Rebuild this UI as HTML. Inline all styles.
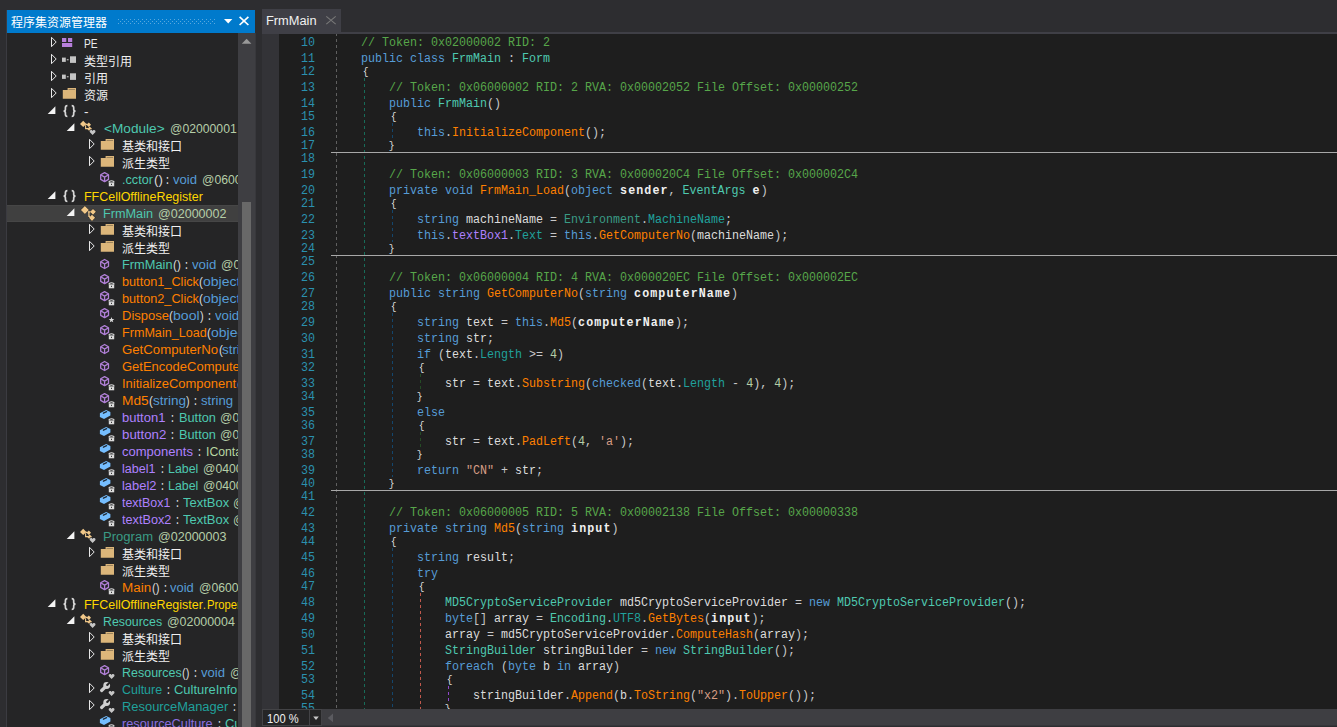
<!DOCTYPE html>
<html><head><meta charset="utf-8"><title>dnSpy</title>
<style>
html,body{margin:0;padding:0}
body{width:1337px;height:727px;overflow:hidden;background:#2d2d30;position:relative;font-family:"Liberation Sans",sans-serif;}
div,svg,span{position:absolute;box-sizing:border-box}
.t{font:12.5px/17px "Liberation Sans",sans-serif;white-space:pre;transform-origin:0 0;top:1px;height:17px}
.r{left:0;width:231px;height:17px}
.ic{width:18px;height:17px;overflow:visible}
.cl{left:71px;font:12.5px/16px "Liberation Mono",monospace;white-space:pre;transform-origin:0 0;transform:scaleX(0.9332);height:16px;color:#dcdcdc}
.cl span{position:static}
.ln{left:39px;font:12.5px/16px "Liberation Mono",monospace;white-space:pre;transform-origin:0 0;transform:scaleX(0.9332);height:16px;color:#2b91af}
.cl i{font-style:normal;font-size:10.4px;position:relative;top:0px;color:#dcdcdc}
.cl b{font-weight:bold;color:#f0f0f0;letter-spacing:1.157px}
.k{color:#569cd6}.y{color:#4ec9b0}.sy{color:#3a9b85}.m{color:#ff8000}.n{color:#b5cea8}.f{color:#ae81ff}.p{color:#20a19c}.c{color:#57a64a}.s{color:#d69d85}.u{color:#c8c8c8}
.g{width:1px}
.sep{left:69px;width:1006px;height:1px;background:#a8a8a8}
.cj{font-family:"Liberation Sans","Noto Sans CJK SC",sans-serif;font-size:12px}
</style></head><body>

<svg width="0" height="0" style="left:0;top:0"><defs><g id="ac"><path d="M0.5 2.3 L5.2 7 L0.5 11.7 Z" fill="none" stroke="#e8e8e8" stroke-width="1"/></g><g id="ae"><path d="M7.4 3.3 V11 H-0.3 Z" fill="#f4f4f4"/></g><g id="iPE" fill="#b77fdb"><rect x="1" y="3" width="4.3" height="4"/><rect x="7" y="3" width="4.2" height="4"/><rect x="1" y="8" width="10.2" height="4"/></g><g id="iRef" fill="#c4c4c4"><rect x="1" y="5.6" width="3.8" height="4.3"/><rect x="5.8" y="7.2" width="1.8" height="1.1"/><rect x="9" y="4.3" width="6" height="6.6"/></g><g id="iFo"><path d="M1.8 4 H6.6 V2.1 H15 V12.7 H1.8 Z" fill="#dcb67a"/><path d="M7.6 3.6 H14" stroke="#2a2a2a" stroke-width="0.7" opacity=".55"/></g><g id="iNs" fill="none" stroke="#d8d8d8" stroke-width="1.7"><path d="M6.4 2.6 C4.6 2.6 4.4 3.4 4.4 4.8 V6.4 C4.4 7.6 3.8 8 2.6 8.05 C3.8 8.1 4.4 8.5 4.4 9.7 V11.3 C4.4 12.7 4.6 13.5 6.4 13.5"/><path d="M10.7 2.6 C12.5 2.6 12.7 3.4 12.7 4.8 V6.4 C12.7 7.6 13.3 8 14.5 8.05 C13.3 8.1 12.7 8.5 12.7 9.7 V11.3 C12.7 12.7 12.5 13.5 10.7 13.5"/></g><g id="iCl"><path d="M4.9 0.9 L8.9 4.9 L4.9 8.9 L0.9 4.9Z M13.0 3.9 L15.9 6.8 L13.0 9.7 L10.1 6.8Z M12.0 9.7 L15.1 12.8 L12.0 15.9 L8.9 12.8Z" fill="#f1c889" stroke="#1c1c1c" stroke-width="1" paint-order="stroke"/><path d="M8 6.8 H10.5 M8.9 6.8 V11.4 H10" fill="none" stroke="#f1c889" stroke-width="1.2"/></g><g id="iCs"><path d="M3.2 0.7 L6.4 3.9 L3.2 7.1 L0.0 3.9Z M8.8 2.5 L11.0 4.7 L8.8 6.9 L6.6 4.7Z M9.7 6.6 L12.1 9.0 L9.7 11.4 L7.3 9.0Z" fill="#f1c889"/><path d="M5.5 4.4 H7.5 M5.6 5.2 V8.6 H8" fill="none" stroke="#f1c889" stroke-width="1.1"/></g><g id="oH"><path d="M12.6 15.1 L9.9 12.2 C9.3 11.2 9.9 9.9 11.1 9.9 C11.9 9.9 12.4 10.4 12.6 10.9 C12.8 10.4 13.3 9.9 14.1 9.9 C15.3 9.9 15.9 11.2 15.3 12.2 Z" fill="#c6c6c6" stroke="#252526" stroke-width="1.2" paint-order="stroke"/></g><g id="oL"><path d="M10.2 11.4 V10.6 Q12.5 8.9 14.8 10.6 V11.4" fill="none" stroke="#d8d8d8" stroke-width="1.2"/><rect x="9.8" y="11.4" width="5.4" height="3.9" fill="#dadada"/><rect x="12" y="12.8" width="1" height="1.1" fill="#252526"/></g><g id="oS"><polygon points="12.50,9.90 13.23,11.89 15.35,11.97 13.69,13.29 14.26,15.33 12.50,14.15 10.74,15.33 11.31,13.29 9.65,11.97 11.77,11.89" fill="#dcdcdc"/></g><g id="iMe" fill="none" stroke="#b180d7" stroke-width="1.3" stroke-linejoin="round"><path d="M5.6 3.5 L9.5 5.7 V10.3 L5.6 12.5 L1.7 10.3 V5.7 Z"/><path d="M2 5.9 L5.6 8 L9.2 5.9 M5.6 8 V12.3"/></g><g id="iFi"><path d="M7.1 0.9 L11.4 3 V6.6 L5 10.1 L0.9 8 V4.3 Z" fill="#75beff"/><path d="M4.4 4.2 L7.6 2.7" stroke="#1f2a36" stroke-width="1.3" stroke-linecap="round"/></g><g id="iWr"><path d="M7 5.4 L2.6 9.5" stroke="#cfcfcf" stroke-width="3.2" stroke-linecap="round" fill="none"/><circle cx="7.7" cy="4.5" r="3.4" fill="#cfcfcf"/><circle cx="8.3" cy="3.9" r="1.15" fill="#252526"/><path d="M8.6 3.6 L11.6 0.6" stroke="#252526" stroke-width="2" fill="none"/></g></defs></svg>
<div style="left:7px;top:10px;width:248px;height:23px;background:#007acc"></div>
<svg role="img" aria-label="程序集资源管理器" style="left:11.0px;top:14.5px;overflow:visible" width="98" height="18"><text class="cj" x="0" y="12" fill="#ffffff">程序集资源管理器</text></svg>
<svg style="left:0;top:0" width="260" height="34"><path d="M118 19h1v1h-1zM122 19h1v1h-1zM126 19h1v1h-1zM130 19h1v1h-1zM134 19h1v1h-1zM138 19h1v1h-1zM142 19h1v1h-1zM146 19h1v1h-1zM150 19h1v1h-1zM154 19h1v1h-1zM158 19h1v1h-1zM162 19h1v1h-1zM166 19h1v1h-1zM170 19h1v1h-1zM174 19h1v1h-1zM178 19h1v1h-1zM182 19h1v1h-1zM186 19h1v1h-1zM190 19h1v1h-1zM194 19h1v1h-1zM198 19h1v1h-1zM202 19h1v1h-1zM206 19h1v1h-1zM210 19h1v1h-1zM214 19h1v1h-1zM120 21h1v1h-1zM124 21h1v1h-1zM128 21h1v1h-1zM132 21h1v1h-1zM136 21h1v1h-1zM140 21h1v1h-1zM144 21h1v1h-1zM148 21h1v1h-1zM152 21h1v1h-1zM156 21h1v1h-1zM160 21h1v1h-1zM164 21h1v1h-1zM168 21h1v1h-1zM172 21h1v1h-1zM176 21h1v1h-1zM180 21h1v1h-1zM184 21h1v1h-1zM188 21h1v1h-1zM192 21h1v1h-1zM196 21h1v1h-1zM200 21h1v1h-1zM204 21h1v1h-1zM208 21h1v1h-1zM212 21h1v1h-1zM118 23h1v1h-1zM122 23h1v1h-1zM126 23h1v1h-1zM130 23h1v1h-1zM134 23h1v1h-1zM138 23h1v1h-1zM142 23h1v1h-1zM146 23h1v1h-1zM150 23h1v1h-1zM154 23h1v1h-1zM158 23h1v1h-1zM162 23h1v1h-1zM166 23h1v1h-1zM170 23h1v1h-1zM174 23h1v1h-1zM178 23h1v1h-1zM182 23h1v1h-1zM186 23h1v1h-1zM190 23h1v1h-1zM194 23h1v1h-1zM198 23h1v1h-1zM202 23h1v1h-1zM206 23h1v1h-1zM210 23h1v1h-1zM214 23h1v1h-1z" fill="#59a8de"/><path d="M224 19 H232.4 L228.2 23.4Z" fill="#fff"/><path d="M239.6 16.8 L248.4 25 M248.4 16.8 L239.6 25" stroke="#fff" stroke-width="1.7" fill="none"/></svg>
<div style="left:6px;top:10px;width:1px;height:717px;background:#3b3b41"></div>
<div id="tree" style="left:7px;top:33px;width:231px;height:694px;background:#252526;overflow:hidden">
<div class="r" style="top:2px;">
<svg class="ic" style="left:43.5px;top:0"><use href="#ac"/></svg>
<svg class="ic" style="left:54.0px;top:0"><use href="#iPE" x="0.0" y="0.0"/></svg>
<div class="t" style="left:77.3px;color:#ececec;transform:scaleX(0.8156)">PE</div>
</div>
<div class="r" style="top:19px;">
<svg class="ic" style="left:43.5px;top:0"><use href="#ac"/></svg>
<svg class="ic" style="left:54.0px;top:0"><use href="#iRef" x="0.0" y="0.0"/></svg>
<svg role="img" aria-label="类型引用" style="left:76.8px;top:1.5px;overflow:visible" width="50" height="18"><text class="cj" x="0" y="12" fill="#f0f0f0">类型引用</text></svg>
</div>
<div class="r" style="top:36px;">
<svg class="ic" style="left:43.5px;top:0"><use href="#ac"/></svg>
<svg class="ic" style="left:54.0px;top:0"><use href="#iRef" x="0.0" y="0.0"/></svg>
<svg role="img" aria-label="引用" style="left:76.8px;top:1.5px;overflow:visible" width="26" height="18"><text class="cj" x="0" y="12" fill="#f0f0f0">引用</text></svg>
</div>
<div class="r" style="top:53px;">
<svg class="ic" style="left:43.5px;top:0"><use href="#ac"/></svg>
<svg class="ic" style="left:54.0px;top:0"><use href="#iFo" x="0.0" y="0.0"/></svg>
<svg role="img" aria-label="资源" style="left:76.8px;top:1.5px;overflow:visible" width="26" height="18"><text class="cj" x="0" y="12" fill="#f0f0f0">资源</text></svg>
</div>
<div class="r" style="top:70px;">
<svg class="ic" style="left:41.0px;top:0"><use href="#ae"/></svg>
<svg class="ic" style="left:54.0px;top:0"><use href="#iNs" x="0.0" y="0.0"/></svg>
<div class="t" style="left:77.3px;color:#ececec;transform:scaleX(1.0812)">-</div>
</div>
<div class="r" style="top:87px;">
<svg class="ic" style="left:60.0px;top:0"><use href="#ae"/></svg>
<svg class="ic" style="left:73.0px;top:0"><use href="#iCs" x="0.0" y="0.0"/></svg>
<svg class="ic" style="left:73.0px;top:0"><use href="#oH"/></svg>
<div class="t" style="left:97.3px;color:#4ec9b0;transform:scaleX(1.0900)">&lt;Module&gt;</div>
<div class="t" style="left:163.0px;color:#b5cea8;transform:scaleX(0.9766)">@02000001</div>
</div>
<div class="r" style="top:104px;">
<svg class="ic" style="left:81.5px;top:0"><use href="#ac"/></svg>
<svg class="ic" style="left:92.0px;top:0"><use href="#iFo" x="0.0" y="0.0"/></svg>
<svg role="img" aria-label="基类和接口" style="left:114.8px;top:1.5px;overflow:visible" width="62" height="18"><text class="cj" x="0" y="12" fill="#f0f0f0">基类和接口</text></svg>
</div>
<div class="r" style="top:121px;">
<svg class="ic" style="left:81.5px;top:0"><use href="#ac"/></svg>
<svg class="ic" style="left:92.0px;top:0"><use href="#iFo" x="0.0" y="0.0"/></svg>
<svg role="img" aria-label="派生类型" style="left:114.8px;top:1.5px;overflow:visible" width="50" height="18"><text class="cj" x="0" y="12" fill="#f0f0f0">派生类型</text></svg>
</div>
<div class="r" style="top:138px;">
<svg class="ic" style="left:92.0px;top:0"><use href="#iMe" x="0.0" y="-1.9"/></svg>
<svg class="ic" style="left:92.0px;top:0"><use href="#oL"/></svg>
<div class="t" style="left:115.3px;color:#4ec9b0;transform:scaleX(1.0112)">.cctor</div>
<div class="t" style="left:146.6px;color:#dadada;transform:scaleX(1.0572)">()</div>
<div class="t" style="left:159.2px;color:#dadada;font-weight:bold;transform:scaleX(0.6911)">:</div>
<div class="t" style="left:165.8px;color:#569cd6;transform:scaleX(1.0467)">void</div>
<div class="t" style="left:194.8px;color:#b5cea8;transform:scaleX(0.9766)">@06000001</div>
</div>
<div class="r" style="top:155px;">
<svg class="ic" style="left:41.0px;top:0"><use href="#ae"/></svg>
<svg class="ic" style="left:54.0px;top:0"><use href="#iNs" x="0.0" y="0.0"/></svg>
<div class="t" style="left:77.3px;color:#ffd700;transform:scaleX(0.9963)">FFCellOfflineRegister</div>
</div>
<div class="r" style="top:172px;background:#404040;box-shadow:inset 0 1px #464646,inset 0 -1px #464646;">
<svg class="ic" style="left:60.0px;top:0"><use href="#ae"/></svg>
<svg class="ic" style="left:73.0px;top:0"><use href="#iCl" x="0.0" y="0.0"/></svg>
<div class="t" style="left:96.4px;color:#4ec9b0;transform:scaleX(1.0142)">FrmMain</div>
<div class="t" style="left:150.8px;color:#b5cea8;transform:scaleX(1.0029)">@02000002</div>
</div>
<div class="r" style="top:189px;">
<svg class="ic" style="left:81.5px;top:0"><use href="#ac"/></svg>
<svg class="ic" style="left:92.0px;top:0"><use href="#iFo" x="0.0" y="0.0"/></svg>
<svg role="img" aria-label="基类和接口" style="left:114.8px;top:1.5px;overflow:visible" width="62" height="18"><text class="cj" x="0" y="12" fill="#f0f0f0">基类和接口</text></svg>
</div>
<div class="r" style="top:206px;">
<svg class="ic" style="left:81.5px;top:0"><use href="#ac"/></svg>
<svg class="ic" style="left:92.0px;top:0"><use href="#iFo" x="0.0" y="0.0"/></svg>
<svg role="img" aria-label="派生类型" style="left:114.8px;top:1.5px;overflow:visible" width="50" height="18"><text class="cj" x="0" y="12" fill="#f0f0f0">派生类型</text></svg>
</div>
<div class="r" style="top:223px;">
<svg class="ic" style="left:92.0px;top:0"><use href="#iMe" x="0.0" y="0.0"/></svg>
<div class="t" style="left:115.3px;color:#4ec9b0;transform:scaleX(1.0243)">FrmMain</div>
<div class="t" style="left:166.0px;color:#dadada;transform:scaleX(0.9370)">()</div>
<div class="t" style="left:177.8px;color:#dadada;font-weight:bold;transform:scaleX(0.6911)">:</div>
<div class="t" style="left:184.6px;color:#569cd6;transform:scaleX(1.0598)">void</div>
<div class="t" style="left:214.0px;color:#b5cea8;transform:scaleX(0.9766)">@06000002</div>
</div>
<div class="r" style="top:240px;">
<svg class="ic" style="left:92.0px;top:0"><use href="#iMe" x="0.0" y="-1.9"/></svg>
<svg class="ic" style="left:92.0px;top:0"><use href="#oL"/></svg>
<div class="t" style="left:115.3px;color:#ff8000;transform:scaleX(1.0154)">button1_Click</div>
<div class="t" style="left:192.4px;color:#dadada;transform:scaleX(0.9370)">(</div>
<div class="t" style="left:196.2px;color:#569cd6;transform:scaleX(1.1183)">object</div>
</div>
<div class="r" style="top:257px;">
<svg class="ic" style="left:92.0px;top:0"><use href="#iMe" x="0.0" y="-1.9"/></svg>
<svg class="ic" style="left:92.0px;top:0"><use href="#oL"/></svg>
<div class="t" style="left:115.3px;color:#ff8000;transform:scaleX(1.0154)">button2_Click</div>
<div class="t" style="left:192.4px;color:#dadada;transform:scaleX(0.9370)">(</div>
<div class="t" style="left:196.2px;color:#569cd6;transform:scaleX(1.1183)">object</div>
</div>
<div class="r" style="top:274px;">
<svg class="ic" style="left:92.0px;top:0"><use href="#iMe" x="0.0" y="-1.9"/></svg>
<svg class="ic" style="left:92.0px;top:0"><use href="#oS"/></svg>
<div class="t" style="left:115.3px;color:#ff8000;transform:scaleX(1.0408)">Dispose</div>
<div class="t" style="left:162.4px;color:#dadada;transform:scaleX(0.9370)">(</div>
<div class="t" style="left:166.2px;color:#569cd6;transform:scaleX(1.1256)">bool</div>
<div class="t" style="left:192.8px;color:#dadada;transform:scaleX(0.8890)">)</div>
<div class="t" style="left:200.8px;color:#dadada;font-weight:bold;transform:scaleX(0.6911)">:</div>
<div class="t" style="left:207.8px;color:#569cd6;transform:scaleX(1.0554)">void</div>
</div>
<div class="r" style="top:291px;">
<svg class="ic" style="left:92.0px;top:0"><use href="#iMe" x="0.0" y="-1.9"/></svg>
<svg class="ic" style="left:92.0px;top:0"><use href="#oL"/></svg>
<div class="t" style="left:115.3px;color:#ff8000;transform:scaleX(1.0077)">FrmMain_Load</div>
<div class="t" style="left:200.2px;color:#dadada;transform:scaleX(0.9370)">(</div>
<div class="t" style="left:204.0px;color:#569cd6;transform:scaleX(1.1183)">object</div>
</div>
<div class="r" style="top:308px;">
<svg class="ic" style="left:92.0px;top:0"><use href="#iMe" x="0.0" y="0.0"/></svg>
<div class="t" style="left:115.3px;color:#ff8000;transform:scaleX(1.0560)">GetComputerNo</div>
<div class="t" style="left:211.5px;color:#dadada;transform:scaleX(0.9370)">(</div>
<div class="t" style="left:215.3px;color:#569cd6;transform:scaleX(1.0699)">string</div>
</div>
<div class="r" style="top:325px;">
<svg class="ic" style="left:92.0px;top:0"><use href="#iMe" x="0.0" y="0.0"/></svg>
<div class="t" style="left:115.3px;color:#ff8000;transform:scaleX(1.0398)">GetEncodeComputerNo</div>
</div>
<div class="r" style="top:342px;">
<svg class="ic" style="left:92.0px;top:0"><use href="#iMe" x="0.0" y="-1.9"/></svg>
<svg class="ic" style="left:92.0px;top:0"><use href="#oL"/></svg>
<div class="t" style="left:115.3px;color:#ff8000;transform:scaleX(1.0394)">InitializeComponent</div>
<div class="t" style="left:229.5px;color:#dadada;transform:scaleX(1.0211)">()</div>
</div>
<div class="r" style="top:359px;">
<svg class="ic" style="left:92.0px;top:0"><use href="#iMe" x="0.0" y="-1.9"/></svg>
<svg class="ic" style="left:92.0px;top:0"><use href="#oL"/></svg>
<div class="t" style="left:115.3px;color:#ff8000;transform:scaleX(1.0981)">Md5</div>
<div class="t" style="left:142.2px;color:#dadada;transform:scaleX(0.9370)">(</div>
<div class="t" style="left:146.0px;color:#569cd6;transform:scaleX(1.0830)">string</div>
<div class="t" style="left:179.2px;color:#dadada;transform:scaleX(0.8649)">)</div>
<div class="t" style="left:187.3px;color:#dadada;font-weight:bold;transform:scaleX(0.6911)">:</div>
<div class="t" style="left:194.3px;color:#569cd6;transform:scaleX(1.0502)">string</div>
</div>
<div class="r" style="top:376px;">
<svg class="ic" style="left:92.0px;top:0"><use href="#iFi" x="0.0" y="0.0"/></svg>
<svg class="ic" style="left:92.0px;top:0"><use href="#oL"/></svg>
<div class="t" style="left:115.3px;color:#ae81ff;transform:scaleX(1.0407)">button1</div>
<div class="t" style="left:163.9px;color:#dadada;font-weight:bold;transform:scaleX(0.6911)">:</div>
<div class="t" style="left:171.5px;color:#4ec9b0;transform:scaleX(1.0211)">Button</div>
<div class="t" style="left:213.0px;color:#b5cea8;transform:scaleX(0.9766)">@04000001</div>
</div>
<div class="r" style="top:393px;">
<svg class="ic" style="left:92.0px;top:0"><use href="#iFi" x="0.0" y="0.0"/></svg>
<svg class="ic" style="left:92.0px;top:0"><use href="#oL"/></svg>
<div class="t" style="left:115.3px;color:#ae81ff;transform:scaleX(1.0623)">button2</div>
<div class="t" style="left:163.9px;color:#dadada;font-weight:bold;transform:scaleX(0.6911)">:</div>
<div class="t" style="left:171.5px;color:#4ec9b0;transform:scaleX(1.0211)">Button</div>
<div class="t" style="left:213.0px;color:#b5cea8;transform:scaleX(0.9766)">@04000002</div>
</div>
<div class="r" style="top:410px;">
<svg class="ic" style="left:92.0px;top:0"><use href="#iFi" x="0.0" y="0.0"/></svg>
<svg class="ic" style="left:92.0px;top:0"><use href="#oL"/></svg>
<div class="t" style="left:115.3px;color:#ae81ff;transform:scaleX(1.0427)">components</div>
<div class="t" style="left:190.8px;color:#dadada;font-weight:bold;transform:scaleX(0.6911)">:</div>
<div class="t" style="left:198.5px;color:#b8d7a3;transform:scaleX(0.9797)">IContainer</div>
</div>
<div class="r" style="top:427px;">
<svg class="ic" style="left:92.0px;top:0"><use href="#iFi" x="0.0" y="0.0"/></svg>
<svg class="ic" style="left:92.0px;top:0"><use href="#oL"/></svg>
<div class="t" style="left:115.3px;color:#ae81ff;transform:scaleX(1.0042)">label1</div>
<div class="t" style="left:154.1px;color:#dadada;font-weight:bold;transform:scaleX(0.6911)">:</div>
<div class="t" style="left:161.4px;color:#4ec9b0;transform:scaleX(0.9908)">Label</div>
<div class="t" style="left:195.7px;color:#b5cea8;transform:scaleX(0.9766)">@04000003</div>
</div>
<div class="r" style="top:444px;">
<svg class="ic" style="left:92.0px;top:0"><use href="#iFi" x="0.0" y="0.0"/></svg>
<svg class="ic" style="left:92.0px;top:0"><use href="#oL"/></svg>
<div class="t" style="left:115.3px;color:#ae81ff;transform:scaleX(1.0342)">label2</div>
<div class="t" style="left:154.1px;color:#dadada;font-weight:bold;transform:scaleX(0.6911)">:</div>
<div class="t" style="left:161.4px;color:#4ec9b0;transform:scaleX(0.9908)">Label</div>
<div class="t" style="left:195.7px;color:#b5cea8;transform:scaleX(0.9766)">@04000004</div>
</div>
<div class="r" style="top:461px;">
<svg class="ic" style="left:92.0px;top:0"><use href="#iFi" x="0.0" y="0.0"/></svg>
<svg class="ic" style="left:92.0px;top:0"><use href="#oL"/></svg>
<div class="t" style="left:115.3px;color:#ae81ff;transform:scaleX(0.9931)">textBox1</div>
<div class="t" style="left:169.3px;color:#dadada;font-weight:bold;transform:scaleX(0.6911)">:</div>
<div class="t" style="left:176.0px;color:#4ec9b0;transform:scaleX(1.0391)">TextBox</div>
<div class="t" style="left:225.6px;color:#b5cea8;transform:scaleX(0.9766)">@04000005</div>
</div>
<div class="r" style="top:478px;">
<svg class="ic" style="left:92.0px;top:0"><use href="#iFi" x="0.0" y="0.0"/></svg>
<svg class="ic" style="left:92.0px;top:0"><use href="#oL"/></svg>
<div class="t" style="left:115.3px;color:#ae81ff;transform:scaleX(1.0157)">textBox2</div>
<div class="t" style="left:169.3px;color:#dadada;font-weight:bold;transform:scaleX(0.6911)">:</div>
<div class="t" style="left:176.0px;color:#4ec9b0;transform:scaleX(1.0391)">TextBox</div>
<div class="t" style="left:225.6px;color:#b5cea8;transform:scaleX(0.9766)">@04000006</div>
</div>
<div class="r" style="top:495px;">
<svg class="ic" style="left:60.0px;top:0"><use href="#ae"/></svg>
<svg class="ic" style="left:73.0px;top:0"><use href="#iCs" x="0.0" y="0.0"/></svg>
<svg class="ic" style="left:73.0px;top:0"><use href="#oH"/></svg>
<div class="t" style="left:96.4px;color:#3a9b85;transform:scaleX(1.0432)">Program</div>
<div class="t" style="left:150.8px;color:#b5cea8;transform:scaleX(1.0029)">@02000003</div>
</div>
<div class="r" style="top:512px;">
<svg class="ic" style="left:81.5px;top:0"><use href="#ac"/></svg>
<svg class="ic" style="left:92.0px;top:0"><use href="#iFo" x="0.0" y="0.0"/></svg>
<svg role="img" aria-label="基类和接口" style="left:114.8px;top:1.5px;overflow:visible" width="62" height="18"><text class="cj" x="0" y="12" fill="#f0f0f0">基类和接口</text></svg>
</div>
<div class="r" style="top:529px;">
<svg class="ic" style="left:92.0px;top:0"><use href="#iFo" x="0.0" y="0.0"/></svg>
<svg role="img" aria-label="派生类型" style="left:114.8px;top:1.5px;overflow:visible" width="50" height="18"><text class="cj" x="0" y="12" fill="#f0f0f0">派生类型</text></svg>
</div>
<div class="r" style="top:546px;">
<svg class="ic" style="left:92.0px;top:0"><use href="#iMe" x="0.0" y="-1.9"/></svg>
<svg class="ic" style="left:92.0px;top:0"><use href="#oL"/></svg>
<div class="t" style="left:115.3px;color:#ff8000;transform:scaleX(1.0741)">Main</div>
<div class="t" style="left:144.6px;color:#dadada;transform:scaleX(0.9130)">()</div>
<div class="t" style="left:156.5px;color:#dadada;font-weight:bold;transform:scaleX(0.6911)">:</div>
<div class="t" style="left:163.2px;color:#569cd6;transform:scaleX(1.0336)">void</div>
<div class="t" style="left:192.1px;color:#b5cea8;transform:scaleX(0.9766)">@06000008</div>
</div>
<div class="r" style="top:563px;">
<svg class="ic" style="left:41.0px;top:0"><use href="#ae"/></svg>
<svg class="ic" style="left:54.0px;top:0"><use href="#iNs" x="0.0" y="0.0"/></svg>
<div class="t" style="left:77.3px;color:#ffd700;transform:scaleX(0.9963)">FFCellOfflineRegister</div>
<div class="t" style="left:196.2px;color:#ffd700;transform:scaleX(0.8063)">.</div>
<div class="t" style="left:199.8px;color:#ffd700;transform:scaleX(0.8988)">Properties</div>
</div>
<div class="r" style="top:580px;">
<svg class="ic" style="left:60.0px;top:0"><use href="#ae"/></svg>
<svg class="ic" style="left:73.0px;top:0"><use href="#iCs" x="0.0" y="0.0"/></svg>
<svg class="ic" style="left:73.0px;top:0"><use href="#oH"/></svg>
<div class="t" style="left:96.4px;color:#4ec9b0;transform:scaleX(0.9892)">Resources</div>
<div class="t" style="left:160.1px;color:#b5cea8;transform:scaleX(0.9927)">@02000004</div>
</div>
<div class="r" style="top:597px;">
<svg class="ic" style="left:81.5px;top:0"><use href="#ac"/></svg>
<svg class="ic" style="left:92.0px;top:0"><use href="#iFo" x="0.0" y="0.0"/></svg>
<svg role="img" aria-label="基类和接口" style="left:114.8px;top:1.5px;overflow:visible" width="62" height="18"><text class="cj" x="0" y="12" fill="#f0f0f0">基类和接口</text></svg>
</div>
<div class="r" style="top:614px;">
<svg class="ic" style="left:81.5px;top:0"><use href="#ac"/></svg>
<svg class="ic" style="left:92.0px;top:0"><use href="#iFo" x="0.0" y="0.0"/></svg>
<svg role="img" aria-label="派生类型" style="left:114.8px;top:1.5px;overflow:visible" width="50" height="18"><text class="cj" x="0" y="12" fill="#f0f0f0">派生类型</text></svg>
</div>
<div class="r" style="top:631px;">
<svg class="ic" style="left:92.0px;top:0"><use href="#iMe" x="0.0" y="-1.9"/></svg>
<svg class="ic" style="left:92.0px;top:0"><use href="#oH"/></svg>
<div class="t" style="left:115.3px;color:#4ec9b0;transform:scaleX(0.9993)">Resources</div>
<div class="t" style="left:175.2px;color:#dadada;transform:scaleX(0.8890)">()</div>
<div class="t" style="left:187.0px;color:#dadada;font-weight:bold;transform:scaleX(0.6911)">:</div>
<div class="t" style="left:194.1px;color:#569cd6;transform:scaleX(1.0467)">void</div>
<div class="t" style="left:222.5px;color:#b5cea8;transform:scaleX(0.9781)">@06000009</div>
</div>
<div class="r" style="top:648px;">
<svg class="ic" style="left:81.5px;top:0"><use href="#ac"/></svg>
<svg class="ic" style="left:92.0px;top:0"><use href="#iWr" x="0.0" y="0.0"/></svg>
<svg class="ic" style="left:92.0px;top:0"><use href="#oH"/></svg>
<div class="t" style="left:115.3px;color:#20a19c;transform:scaleX(0.9952)">Culture</div>
<div class="t" style="left:160.1px;color:#dadada;font-weight:bold;transform:scaleX(0.6911)">:</div>
<div class="t" style="left:167.2px;color:#4ec9b0;transform:scaleX(1.0353)">CultureInfo</div>
</div>
<div class="r" style="top:665px;">
<svg class="ic" style="left:81.5px;top:0"><use href="#ac"/></svg>
<svg class="ic" style="left:92.0px;top:0"><use href="#iWr" x="0.0" y="0.0"/></svg>
<svg class="ic" style="left:92.0px;top:0"><use href="#oH"/></svg>
<div class="t" style="left:115.3px;color:#20a19c;transform:scaleX(1.0328)">ResourceManager</div>
<div class="t" style="left:226.1px;color:#dadada;font-weight:bold;transform:scaleX(0.6911)">:</div>
</div>
<div class="r" style="top:682px;">
<svg class="ic" style="left:92.0px;top:0"><use href="#iFi" x="0.0" y="0.0"/></svg>
<svg class="ic" style="left:92.0px;top:0"><use href="#oL"/></svg>
<div class="t" style="left:115.3px;color:#8b6fe0;transform:scaleX(1.0200)">resourceCulture</div>
<div class="t" style="left:211.3px;color:#dadada;font-weight:bold;transform:scaleX(0.6911)">:</div>
<div class="t" style="left:218.1px;color:#4ec9b0;transform:scaleX(1.0353)">CultureInfo</div>
</div>
</div>
<div style="left:238px;top:33px;width:17px;height:694px;background:#3e3e42"></div><div style="left:255px;top:33px;width:1px;height:694px;background:#38383c"></div>
<svg style="left:238px;top:33px" width="17" height="20"><path d="M3.8 10.8 L8.6 5.7 L13.4 10.8Z" fill="#999"/></svg>
<div style="left:242px;top:202px;width:9px;height:530px;background:#686868"></div>
<div style="left:262px;top:9px;width:79px;height:25px;background:#3f3f46"></div>
<div style="left:262px;top:32px;width:1075px;height:2px;background:#3f3f46"></div>
<div class="t" style="left:266.4px;top:12.6px;color:#f1f1f1;transform:scaleX(1.0264)">FrmMain</div>
<svg style="left:320px;top:10px" width="22" height="20"><path d="M6.3 6.4 L15.7 14.2 M15.7 6.4 L6.3 14.2" stroke="#787878" stroke-width="1.1" fill="none"/></svg>
<div id="ed" style="left:262px;top:34px;width:1075px;height:675px;background:#1e1e1e;overflow:hidden">
<div style="left:0;top:0;width:17px;height:675px;background:#333337"></div>
<div class="g" style="left:74px;top:-1px;height:676px;background:repeating-linear-gradient(to bottom,#606060 0,#606060 3px,transparent 3px,transparent 6px);background-position:0 0px"></div>
<div class="g" style="left:102px;top:44px;height:631px;background:repeating-linear-gradient(to bottom,#176c59 0,#176c59 3px,transparent 3px,transparent 6px);background-position:0 0px"></div>
<div class="g" style="left:130px;top:89px;height:16px;background:repeating-linear-gradient(to bottom,#14466c 0,#14466c 3px,transparent 3px,transparent 6px);background-position:0 0px"></div>
<div class="g" style="left:130px;top:176px;height:32px;background:repeating-linear-gradient(to bottom,#14466c 0,#14466c 3px,transparent 3px,transparent 6px);background-position:0 0px"></div>
<div class="g" style="left:130px;top:279px;height:164px;background:repeating-linear-gradient(to bottom,#14466c 0,#14466c 3px,transparent 3px,transparent 6px);background-position:0 0px"></div>
<div class="g" style="left:130px;top:514px;height:161px;background:repeating-linear-gradient(to bottom,#14466c 0,#14466c 3px,transparent 3px,transparent 6px);background-position:0 0px"></div>
<div class="g" style="left:158px;top:340px;height:16px;background:repeating-linear-gradient(to bottom,#254c25 0,#254c25 3px,transparent 3px,transparent 6px);background-position:0 0px"></div>
<div class="g" style="left:158px;top:398px;height:16px;background:repeating-linear-gradient(to bottom,#254c25 0,#254c25 3px,transparent 3px,transparent 6px);background-position:0 0px"></div>
<div class="g" style="left:158px;top:559px;height:116px;background:repeating-linear-gradient(to bottom,#c0584c 0,#c0584c 3px,transparent 3px,transparent 6px);background-position:0 0px"></div>
<div class="g" style="left:186px;top:652px;height:16px;background:repeating-linear-gradient(to bottom,#9048cc 0,#9048cc 3px,transparent 3px,transparent 6px);background-position:0 0px"></div>
<div class="ln" style="top:1px">10</div>
<div class="cl" style="top:1px">    <span class="c">// Token: 0x02000002 RID: 2</span></div>
<div class="ln" style="top:17px">11</div>
<div class="cl" style="top:17px">    <span class="k">public</span> <span class="k">class</span> <span class="y">FrmMain</span><span class="u"> : </span><span class="y">Form</span></div>
<div class="ln" style="top:30px">12</div>
<div class="cl" style="top:30px">    <i style="left:1.9px">{</i></div>
<div class="ln" style="top:46px">13</div>
<div class="cl" style="top:46px">        <span class="c">// Token: 0x06000002 RID: 2 RVA: 0x00002052 File Offset: 0x00000252</span></div>
<div class="ln" style="top:62px">14</div>
<div class="cl" style="top:62px">        <span class="k">public</span> <span class="y">FrmMain</span><span class="u">()</span></div>
<div class="ln" style="top:75px">15</div>
<div class="cl" style="top:75px">        <i style="left:1.9px">{</i></div>
<div class="ln" style="top:91px">16</div>
<div class="cl" style="top:91px">            <span class="k">this</span><span class="u">.</span><span class="m">InitializeComponent</span><span class="u">();</span></div>
<div class="ln" style="top:104px">17</div>
<div class="cl" style="top:104px">        <i style="left:-0.3px">}</i></div>
<div class="ln" style="top:117px">18</div>
<div class="ln" style="top:133px">19</div>
<div class="cl" style="top:133px">        <span class="c">// Token: 0x06000003 RID: 3 RVA: 0x000020C4 File Offset: 0x000002C4</span></div>
<div class="ln" style="top:149px">20</div>
<div class="cl" style="top:149px">        <span class="k">private</span> <span class="k">void</span> <span class="m">FrmMain_Load</span><span class="u">(</span><span class="k">object</span> <b>sender</b><span class="u">, </span><span class="y">EventArgs</span> <b>e</b><span class="u">)</span></div>
<div class="ln" style="top:162px">21</div>
<div class="cl" style="top:162px">        <i style="left:1.9px">{</i></div>
<div class="ln" style="top:178px">22</div>
<div class="cl" style="top:178px">            <span class="k">string</span> machineName <span class="u">= </span><span class="sy">Environment</span><span class="u">.</span><span class="p">MachineName</span><span class="u">;</span></div>
<div class="ln" style="top:194px">23</div>
<div class="cl" style="top:194px">            <span class="k">this</span><span class="u">.</span><span class="f">textBox1</span><span class="u">.</span><span class="p">Text</span><span class="u"> = </span><span class="k">this</span><span class="u">.</span><span class="m">GetComputerNo</span><span class="u">(</span>machineName<span class="u">);</span></div>
<div class="ln" style="top:207px">24</div>
<div class="cl" style="top:207px">        <i style="left:-0.3px">}</i></div>
<div class="ln" style="top:220px">25</div>
<div class="ln" style="top:236px">26</div>
<div class="cl" style="top:236px">        <span class="c">// Token: 0x06000004 RID: 4 RVA: 0x000020EC File Offset: 0x000002EC</span></div>
<div class="ln" style="top:252px">27</div>
<div class="cl" style="top:252px">        <span class="k">public</span> <span class="k">string</span> <span class="m">GetComputerNo</span><span class="u">(</span><span class="k">string</span> <b>computerName</b><span class="u">)</span></div>
<div class="ln" style="top:265px">28</div>
<div class="cl" style="top:265px">        <i style="left:1.9px">{</i></div>
<div class="ln" style="top:281px">29</div>
<div class="cl" style="top:281px">            <span class="k">string</span> text <span class="u">= </span><span class="k">this</span><span class="u">.</span><span class="m">Md5</span><span class="u">(</span><b>computerName</b><span class="u">);</span></div>
<div class="ln" style="top:297px">30</div>
<div class="cl" style="top:297px">            <span class="k">string</span> str<span class="u">;</span></div>
<div class="ln" style="top:313px">31</div>
<div class="cl" style="top:313px">            <span class="k">if</span><span class="u"> (</span>text<span class="u">.</span><span class="p">Length</span><span class="u"> &gt;= </span><span class="n">4</span><span class="u">)</span></div>
<div class="ln" style="top:326px">32</div>
<div class="cl" style="top:326px">            <i style="left:1.9px">{</i></div>
<div class="ln" style="top:342px">33</div>
<div class="cl" style="top:342px">                str <span class="u">= </span>text<span class="u">.</span><span class="m">Substring</span><span class="u">(</span><span class="k">checked</span><span class="u">(</span>text<span class="u">.</span><span class="p">Length</span><span class="u"> - </span><span class="n">4</span><span class="u">), </span><span class="n">4</span><span class="u">);</span></div>
<div class="ln" style="top:355px">34</div>
<div class="cl" style="top:355px">            <i style="left:-0.3px">}</i></div>
<div class="ln" style="top:371px">35</div>
<div class="cl" style="top:371px">            <span class="k">else</span></div>
<div class="ln" style="top:384px">36</div>
<div class="cl" style="top:384px">            <i style="left:1.9px">{</i></div>
<div class="ln" style="top:400px">37</div>
<div class="cl" style="top:400px">                str <span class="u">= </span>text<span class="u">.</span><span class="m">PadLeft</span><span class="u">(</span><span class="n">4</span><span class="u">, </span><span class="s">&#x27;a&#x27;</span><span class="u">);</span></div>
<div class="ln" style="top:413px">38</div>
<div class="cl" style="top:413px">            <i style="left:-0.3px">}</i></div>
<div class="ln" style="top:429px">39</div>
<div class="cl" style="top:429px">            <span class="k">return</span> <span class="s">&quot;CN&quot;</span><span class="u"> + </span>str<span class="u">;</span></div>
<div class="ln" style="top:442px">40</div>
<div class="cl" style="top:442px">        <i style="left:-0.3px">}</i></div>
<div class="ln" style="top:455px">41</div>
<div class="ln" style="top:471px">42</div>
<div class="cl" style="top:471px">        <span class="c">// Token: 0x06000005 RID: 5 RVA: 0x00002138 File Offset: 0x00000338</span></div>
<div class="ln" style="top:487px">43</div>
<div class="cl" style="top:487px">        <span class="k">private</span> <span class="k">string</span> <span class="m">Md5</span><span class="u">(</span><span class="k">string</span> <b>input</b><span class="u">)</span></div>
<div class="ln" style="top:500px">44</div>
<div class="cl" style="top:500px">        <i style="left:1.9px">{</i></div>
<div class="ln" style="top:516px">45</div>
<div class="cl" style="top:516px">            <span class="k">string</span> result<span class="u">;</span></div>
<div class="ln" style="top:532px">46</div>
<div class="cl" style="top:532px">            <span class="k">try</span></div>
<div class="ln" style="top:545px">47</div>
<div class="cl" style="top:545px">            <i style="left:1.9px">{</i></div>
<div class="ln" style="top:561px">48</div>
<div class="cl" style="top:561px">                <span class="y">MD5CryptoServiceProvider</span> md5CryptoServiceProvider <span class="u">= </span><span class="k">new</span> <span class="y">MD5CryptoServiceProvider</span><span class="u">();</span></div>
<div class="ln" style="top:577px">49</div>
<div class="cl" style="top:577px">                <span class="k">byte</span><span class="u">[] </span>array <span class="u">= </span><span class="y">Encoding</span><span class="u">.</span><span class="p">UTF8</span><span class="u">.</span><span class="m">GetBytes</span><span class="u">(</span><b>input</b><span class="u">);</span></div>
<div class="ln" style="top:593px">50</div>
<div class="cl" style="top:593px">                array <span class="u">= </span>md5CryptoServiceProvider<span class="u">.</span><span class="m">ComputeHash</span><span class="u">(</span>array<span class="u">);</span></div>
<div class="ln" style="top:609px">51</div>
<div class="cl" style="top:609px">                <span class="y">StringBuilder</span> stringBuilder <span class="u">= </span><span class="k">new</span> <span class="y">StringBuilder</span><span class="u">();</span></div>
<div class="ln" style="top:625px">52</div>
<div class="cl" style="top:625px">                <span class="k">foreach</span><span class="u"> (</span><span class="k">byte</span> b <span class="k">in</span> array<span class="u">)</span></div>
<div class="ln" style="top:638px">53</div>
<div class="cl" style="top:638px">                <i style="left:1.9px">{</i></div>
<div class="ln" style="top:654px">54</div>
<div class="cl" style="top:654px">                    stringBuilder<span class="u">.</span><span class="m">Append</span><span class="u">(</span>b<span class="u">.</span><span class="m">ToString</span><span class="u">(</span><span class="s">&quot;x2&quot;</span><span class="u">).</span><span class="m">ToUpper</span><span class="u">());</span></div>
<div class="ln" style="top:667px">55</div>
<div class="cl" style="top:667px">                <i style="left:-0.3px">}</i></div>
<div class="sep" style="top:118px"></div>
<div class="sep" style="top:221px"></div>
<div class="sep" style="top:456px"></div>
</div>
<div style="left:262px;top:709px;width:1075px;height:16px;background:#3e3e42"></div>
<div style="left:262px;top:725px;width:1075px;height:1px;background:#36363a"></div>
<div style="left:262px;top:709px;width:60px;height:17px;background:#252526;border:1px solid #434346"></div>
<div style="left:309px;top:709px;width:1px;height:17px;background:#434346"></div>
<div class="t" style="left:267.2px;top:710.6px;font-size:12px;color:#f1f1f1;transform:scaleX(0.9288)">100 %</div>
<svg style="left:310px;top:709px" width="30" height="17"><path d="M3.2 7.6 H8.8 L6 11Z" fill="#c8c8c8"/><path d="M23 4.6 V13.2 L17.8 8.9Z" fill="#5b5b60"/></svg>
</body></html>
